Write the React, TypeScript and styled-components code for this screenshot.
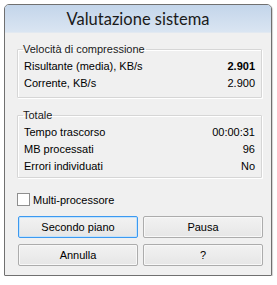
import React from 'react'
import styled, { createGlobalStyle } from 'styled-components'

const GlobalStyle = createGlobalStyle`
  html, body {
    margin: 0;
    padding: 0;
    background: #ffffff;
  }
  body {
    font-family: "Liberation Sans", Arial, sans-serif;
    font-size: 11px;
    color: #000000;
  }
`

const Window = styled.div`
  box-sizing: border-box;
  margin: 4px 0 0 4px;
  width: 268px;
  height: 272px;
  border: 1px solid #707070;
  border-radius: 5px 5px 1px 1px;
  background: #f0f0f0;
  box-shadow: 1px 1px 1px rgba(0, 0, 0, 0.18);
  overflow: hidden;
  display: flex;
  flex-direction: column;
`

const TitleBar = styled.div`
  height: 26px;
  display: flex;
  align-items: center;
  justify-content: center;
  background: linear-gradient(#c3d5ea, #dae5f2);
  border-bottom: 1px solid #e2e9f1;
  font-family: Lato, "Liberation Sans", sans-serif;
  font-size: 16.5px;
  color: #1a1a1a;
  padding-top: 1px;
`

const Body = styled.div`
  padding: 10px 9px 0 12px;
  display: flex;
  flex-direction: column;
`

const Group = styled.fieldset<{ $gap: number; $rowGap: number; $bottom: number }>`
  margin: 0 0 ${({ $gap }) => $gap}px 0;
  padding: 4px 6px ${({ $bottom }) => $bottom}px 6px;
  border: 1px solid #d6d6d6;
  border-radius: 1px;
  box-shadow: inset 1px 1px 0 #ffffff, 1px 1px 0 #ffffff;
  display: flex;
  flex-direction: column;
  gap: ${({ $rowGap }) => $rowGap}px;
`

const Legend = styled.legend`
  padding: 0 1px 0 0;
  margin-left: -1px;
  line-height: 13px;
  color: #1a1a1a;
`

const Row = styled.div`
  display: flex;
  justify-content: space-between;
  align-items: center;
  height: 13px;
  line-height: 13px;
`

const Value = styled.span<{ $bold?: boolean }>`
  font-weight: ${({ $bold }) => ($bold ? 'bold' : 'normal')};
`

const CheckRow = styled.label`
  display: flex;
  align-items: center;
  gap: 3px;
  height: 13px;
  margin: 0 0 10px 0;
`

const CheckBox = styled.span`
  box-sizing: border-box;
  width: 13px;
  height: 13px;
  border: 1px solid #8f8f8f;
  background: #ffffff;
`

const ButtonGrid = styled.div`
  display: grid;
  grid-template-columns: 120px 120px;
  column-gap: 5px;
  row-gap: 6px;
  padding-left: 1px;
`

const Button = styled.button<{ $focused?: boolean }>`
  box-sizing: border-box;
  height: 22px;
  margin: 0;
  padding: 0;
  font-family: "Liberation Sans", Arial, sans-serif;
  font-size: 11px;
  color: #000000;
  border: 1px solid ${({ $focused }) => ($focused ? '#3c99f0' : '#acacac')};
  border-radius: 2px;
  background: linear-gradient(#f2f2f2, #e6e6e6);
  box-shadow: inset 0 0 0 1px ${({ $focused }) => ($focused ? '#c4e3fc' : '#f8f8f8')};
`

const speed = [
  { label: 'Risultante (media), KB/s', value: '2.901', bold: true },
  { label: 'Corrente, KB/s', value: '2.900' },
]

const totals = [
  { label: 'Tempo trascorso', value: '00:00:31' },
  { label: 'MB processati', value: '96' },
  { label: 'Errori individuati', value: 'No' },
]

export default function App() {
  return (
    <>
      <GlobalStyle />
      <Window>
        <TitleBar>Valutazione sistema</TitleBar>
        <Body>
          <Group $gap={11} $rowGap={4} $bottom={7}>
            <Legend>Velocità di compressione</Legend>
            {speed.map((r) => (
              <Row key={r.label}>
                <span>{r.label}</span>
                <Value $bold={r.bold}>{r.value}</Value>
              </Row>
            ))}
          </Group>
          <Group $gap={15} $rowGap={4} $bottom={4}>
            <Legend>Totale</Legend>
            {totals.map((r) => (
              <Row key={r.label}>
                <span>{r.label}</span>
                <Value>{r.value}</Value>
              </Row>
            ))}
          </Group>
          <CheckRow>
            <CheckBox />
            Multi-processore
          </CheckRow>
          <ButtonGrid>
            <Button $focused>Secondo piano</Button>
            <Button>Pausa</Button>
            <Button>Annulla</Button>
            <Button>?</Button>
          </ButtonGrid>
        </Body>
      </Window>
    </>
  )
}
